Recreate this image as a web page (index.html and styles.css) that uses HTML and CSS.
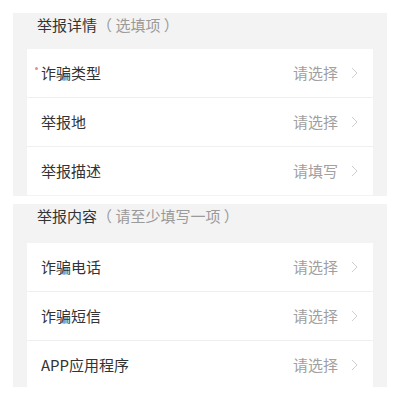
FILE: index.html
```html
<!DOCTYPE html>
<html lang="zh-CN">
<head>
<meta charset="utf-8">
<title>举报</title>
<link rel="stylesheet" href="styles.css">
</head>
<body>
<div class="page">
  <section class="panel">
    <div class="section-title">举报详情<span class="hint">（ 选填项 ）</span></div>
    <div class="list">
      <div class="row">
        <span class="label required">诈骗类型</span>
        <span class="value">请选择</span>
        <svg class="chev" width="7" height="12" viewBox="0 0 7 12"><polyline points="1,1 6,6 1,11" fill="none" stroke="#cfcfcf" stroke-width="1"/></svg>
      </div>
      <div class="row">
        <span class="label">举报地</span>
        <span class="value">请选择</span>
        <svg class="chev" width="7" height="12" viewBox="0 0 7 12"><polyline points="1,1 6,6 1,11" fill="none" stroke="#cfcfcf" stroke-width="1"/></svg>
      </div>
      <div class="row">
        <span class="label">举报描述</span>
        <span class="value">请填写</span>
        <svg class="chev" width="7" height="12" viewBox="0 0 7 12"><polyline points="1,1 6,6 1,11" fill="none" stroke="#cfcfcf" stroke-width="1"/></svg>
      </div>
    </div>
  </section>
  <section class="panel">
    <div class="section-title section-title--tall">举报内容<span class="hint">（ 请至少填写一项 ）</span></div>
    <div class="list">
      <div class="row">
        <span class="label">诈骗电话</span>
        <span class="value">请选择</span>
        <svg class="chev" width="7" height="12" viewBox="0 0 7 12"><polyline points="1,1 6,6 1,11" fill="none" stroke="#cfcfcf" stroke-width="1"/></svg>
      </div>
      <div class="row">
        <span class="label">诈骗短信</span>
        <span class="value">请选择</span>
        <svg class="chev" width="7" height="12" viewBox="0 0 7 12"><polyline points="1,1 6,6 1,11" fill="none" stroke="#cfcfcf" stroke-width="1"/></svg>
      </div>
      <div class="row">
        <span class="label">APP应用程序</span>
        <span class="value">请选择</span>
        <svg class="chev" width="7" height="12" viewBox="0 0 7 12"><polyline points="1,1 6,6 1,11" fill="none" stroke="#cfcfcf" stroke-width="1"/></svg>
      </div>
    </div>
  </section>
</div>
</body>
</html>
```

FILE: styles.css
```css
html, body {
  margin: 0;
  padding: 0;
  background: #ffffff;
}
body {
  font-family: "Noto Sans CJK SC", "Noto Sans", sans-serif;
  font-size: 15px;
  color: #333333;
}
.page {
  margin: 13px;
  width: 374px;
  height: 374px;
  overflow: hidden;
}
.panel {
  background: #f3f3f3;
  padding: 0 14px 1px;
}
.panel + .panel {
  margin-top: 8px;
}
.section-title {
  padding: 0 0 12px 10px;
  line-height: 24px;
  font-size: 15px;
  color: #333333;
}
.section-title--tall {
  padding-bottom: 15px;
}
.hint {
  color: #9a9a9a;
  text-spacing-trim: space-all;
  font-feature-settings: "halt" 0;
}
.list {
  background: #ffffff;
}
.row {
  display: flex;
  align-items: center;
  height: 48px;
  padding: 0 15px 0 14px;
  border-bottom: 1px solid #efefef;
}
.row:last-child {
  border-bottom: none;
}
.label {
  flex: 1;
  position: relative;
  line-height: 20px;
  color: #333333;
}
.required::before {
  content: "";
  position: absolute;
  left: -6px;
  top: 4px;
  width: 3px;
  height: 3px;
  border-radius: 50%;
  background: #ec8c8c;
}
.value {
  line-height: 20px;
  color: #a0a0a0;
}
.chev {
  margin-left: 13px;
  display: block;
}
```
